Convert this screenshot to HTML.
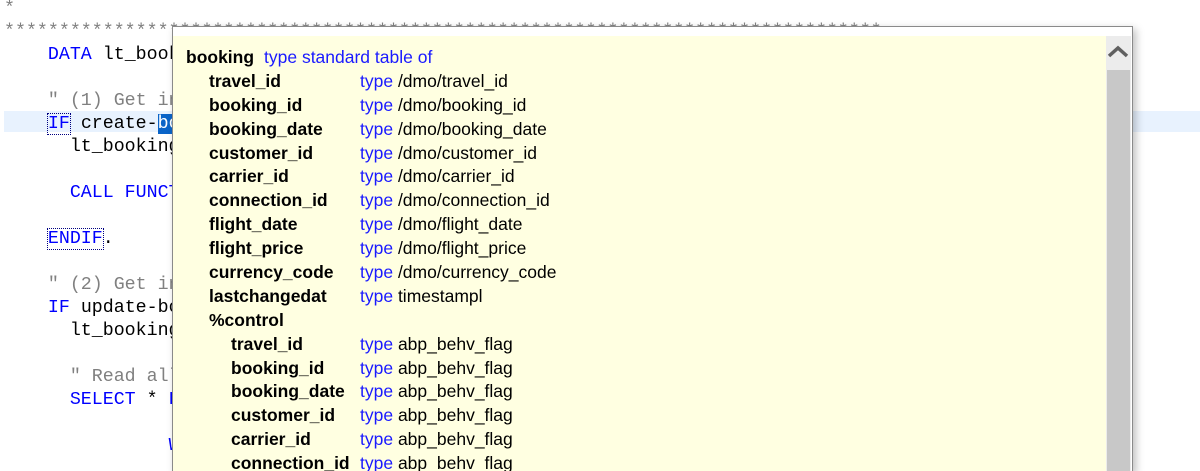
<!DOCTYPE html>
<html><head><meta charset="utf-8"><style>
html,body{margin:0;width:1200px;height:471px;overflow:hidden}
body{background:#fff;position:relative;font-family:"Liberation Mono",monospace}
.hl{position:absolute;left:4px;top:111px;width:1196px;height:21px;background:#e8f2fe}
.code{position:absolute;left:4px;top:-2.5px;font-size:18.3px;line-height:23px;white-space:pre;color:#000;height:474px;overflow:hidden}
.k{color:#0000ff}.c{color:#808080}
.box{outline:1px dotted #000080;outline-offset:0}
.sel{background:#0a64c8;color:#fff}
.pop{position:absolute;left:172px;top:26px;width:959px;height:445px;border:1px solid #8a8a8a;border-bottom:none;background:#fff;box-shadow:3px 3px 8px rgba(0,0,0,.25);overflow:hidden}
.yel{position:absolute;left:0;top:9px;width:933px;height:440px;background:#ffffe1}
.sb{position:absolute;left:933px;top:9px;width:25px;height:440px;background:#ececec}
.th{position:absolute;left:1px;top:34px;width:23px;height:410px;background:#c8c8c8}
.rows{position:absolute;left:13px;top:19px;font-family:"Liberation Sans",sans-serif;font-size:17.5px;line-height:23.9px;white-space:nowrap}
.r{position:relative;height:23.9px}
.n{font-weight:bold;position:absolute}
.t{position:absolute;left:174px}
.b{color:#1a1aff}
</style></head><body>
<div class="hl"></div>
<div class="code"><span class="c">*</span>
<span class="c">********************************************************************************</span>
    <span class="k">DATA</span> lt_booking TYPE STANDARD TABLE

    <span class="c">" (1) Get info from create</span>
    <span class="k box">IF</span> create-<span class="sel">bo</span>oking IS NOT INITIAL.
      lt_booking = CORRESPONDING #( create-booking ).

      <span class="k">CALL FUNCTION</span>

    <span class="k box">ENDIF</span>.

    <span class="c">" (2) Get info from update</span>
    <span class="k">IF</span> update-booking IS NOT INITIAL.
      lt_booking = CORRESPONDING

      <span class="c">" Read all</span>
      <span class="k">SELECT</span> * <span class="k">FROM</span>

               <span class="k">WHERE</span></div>
<div class="pop">
<div class="yel"></div>
<div class="sb"><svg width="25" height="25" style="position:absolute;left:0;top:3px"><path d="M3 17 L12 9 L21 17" fill="none" stroke="#606060" stroke-width="3.5"/></svg><div class="th"></div></div>
<div class="rows"><div class="r"><span class="n" style="left:0">booking</span><span class="b" style="position:absolute;left:78px">type standard table of</span></div><div class="r"><span class="n" style="left:23px">travel_id</span><span class="t"><span class="b">type</span> /dmo/travel_id</span></div><div class="r"><span class="n" style="left:23px">booking_id</span><span class="t"><span class="b">type</span> /dmo/booking_id</span></div><div class="r"><span class="n" style="left:23px">booking_date</span><span class="t"><span class="b">type</span> /dmo/booking_date</span></div><div class="r"><span class="n" style="left:23px">customer_id</span><span class="t"><span class="b">type</span> /dmo/customer_id</span></div><div class="r"><span class="n" style="left:23px">carrier_id</span><span class="t"><span class="b">type</span> /dmo/carrier_id</span></div><div class="r"><span class="n" style="left:23px">connection_id</span><span class="t"><span class="b">type</span> /dmo/connection_id</span></div><div class="r"><span class="n" style="left:23px">flight_date</span><span class="t"><span class="b">type</span> /dmo/flight_date</span></div><div class="r"><span class="n" style="left:23px">flight_price</span><span class="t"><span class="b">type</span> /dmo/flight_price</span></div><div class="r"><span class="n" style="left:23px">currency_code</span><span class="t"><span class="b">type</span> /dmo/currency_code</span></div><div class="r"><span class="n" style="left:23px">lastchangedat</span><span class="t"><span class="b">type</span> timestampl</span></div><div class="r"><span class="n" style="left:23px">%control</span></div><div class="r"><span class="n" style="left:45px">travel_id</span><span class="t"><span class="b">type</span> abp_behv_flag</span></div><div class="r"><span class="n" style="left:45px">booking_id</span><span class="t"><span class="b">type</span> abp_behv_flag</span></div><div class="r"><span class="n" style="left:45px">booking_date</span><span class="t"><span class="b">type</span> abp_behv_flag</span></div><div class="r"><span class="n" style="left:45px">customer_id</span><span class="t"><span class="b">type</span> abp_behv_flag</span></div><div class="r"><span class="n" style="left:45px">carrier_id</span><span class="t"><span class="b">type</span> abp_behv_flag</span></div><div class="r"><span class="n" style="left:45px">connection_id</span><span class="t"><span class="b">type</span> abp_behv_flag</span></div></div>
</div>
</body></html>
